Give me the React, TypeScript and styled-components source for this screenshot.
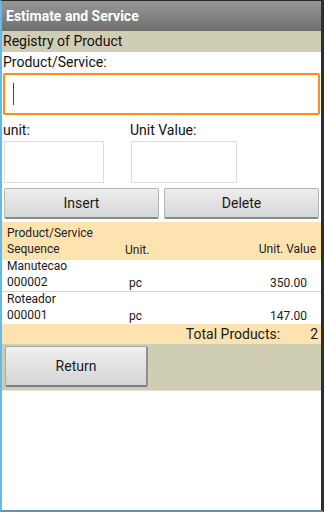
import styled, { createGlobalStyle } from 'styled-components';

const GlobalStyle = createGlobalStyle`
  html, body {
    margin: 0;
    padding: 0;
    background: #ffffff;
  }
  * {
    box-sizing: border-box;
  }
`;

const items = [
  { name: 'Manutecao', seq: '000002', unit: 'pc', value: '350.00' },
  { name: 'Roteador', seq: '000001', unit: 'pc', value: '147.00' },
];

const App = () => {
  return (
    <>
      <GlobalStyle />
      <Screen>
        <TitleBar>Estimate and Service</TitleBar>
        <SectionBar>Registry of Product</SectionBar>
        <Label>Product/Service:</Label>
        <MainInput>
          <Cursor />
        </MainInput>
        <FieldRow>
          <Field width={102}>
            <Label>unit:</Label>
            <SmallInput />
          </Field>
          <Field width={108}>
            <Label>Unit Value:</Label>
            <SmallInput />
          </Field>
        </FieldRow>
        <ButtonRow>
          <Button>Insert</Button>
          <Button>Delete</Button>
        </ButtonRow>
        <TableHead>
          <HeadCell>
            <div>Product/Service</div>
            <div>Sequence</div>
          </HeadCell>
          <HeadUnit>Unit.</HeadUnit>
          <HeadValue>Unit. Value</HeadValue>
        </TableHead>
        {items.map((i, key) => (
          <Row key={key} last={key === items.length - 1}>
            <Cell>
              <div>{i.name}</div>
              <div>{i.seq}</div>
            </Cell>
            <UnitCell>{i.unit}</UnitCell>
            <ValueCell>{i.value}</ValueCell>
          </Row>
        ))}
        <TotalRow>
          <span>Total Products:</span>
          <TotalCount>2</TotalCount>
        </TotalRow>
        <Footer>
          <ReturnButton>Return</ReturnButton>
        </Footer>
      </Screen>
    </>
  );
};

export default App;

const Screen = styled.div`
  width: 324px;
  height: 512px;
  display: flex;
  flex-direction: column;
  background: #ffffff;
  border-top: 1px solid #2b2b2b;
  border-left: 2px solid #6cb8dc;
  border-right: 3px solid #2e2e2e;
  border-bottom: 2px solid #5d95b0;
  font-family: Roboto, 'Liberation Sans', sans-serif;
  color: #111111;
  overflow: hidden;
`;

const TitleBar = styled.div`
  height: 30px;
  flex-shrink: 0;
  display: flex;
  align-items: center;
  padding: 0 0 0 4px;
  background: linear-gradient(#979797, #6f6f6f);
  color: #ffffff;
  font-weight: bold;
  font-size: 14px;
`;

const SectionBar = styled.div`
  height: 21px;
  flex-shrink: 0;
  display: flex;
  align-items: center;
  padding: 0 0 2px 1px;
  background: #d0cdb5;
  font-size: 14px;
`;

const Label = styled.div`
  height: 20px;
  display: flex;
  align-items: center;
  padding-left: 1px;
  font-size: 14px;
`;

const MainInput = styled.div`
  height: 42px;
  flex-shrink: 0;
  margin: 1px 1px 0 1px;
  border: 2px solid #ff8c14;
  border-radius: 2px;
  display: flex;
  align-items: center;
  padding-left: 8px;
`;

const Cursor = styled.div`
  width: 1px;
  height: 22px;
  background: #444444;
`;

const FieldRow = styled.div`
  display: flex;
  gap: 25px;
  margin-top: 5px;
`;

const Field = styled.div<{ width: number }>`
  display: flex;
  flex-direction: column;
  width: ${(p) => p.width}px;
`;

const SmallInput = styled.div`
  height: 42px;
  margin: 1px 0 0 2px;
  border: 1px solid #dedede;
  background: #ffffff;
`;

const ButtonRow = styled.div`
  display: flex;
  gap: 5px;
  padding: 5px 2px 0 2px;
`;

const Button = styled.div`
  flex: 1;
  height: 31px;
  display: flex;
  align-items: center;
  justify-content: center;
  background: linear-gradient(#eeeeee, #d6d6d6);
  border: 1px solid #b4b4b4;
  border-bottom: 2px solid #8a8a8a;
  border-radius: 2px;
  font-size: 14px;
  color: #1a1a1a;
`;

const TableHead = styled.div`
  margin-top: 3px;
  height: 38px;
  flex-shrink: 0;
  display: flex;
  align-items: flex-end;
  padding: 0 5px 3px 5px;
  background: #fde3b0;
  font-size: 12px;
  color: #222222;
`;

const HeadCell = styled.div`
  width: 118px;
  line-height: 16px;
`;

const HeadUnit = styled.div`
  width: 60px;
  line-height: 14px;
`;

const HeadValue = styled.div`
  flex: 1;
  text-align: right;
  line-height: 16px;
`;

const Row = styled.div<{ last?: boolean }>`
  height: 32px;
  flex-shrink: 0;
  display: flex;
  align-items: flex-end;
  padding: 0 14px 1px 5px;
  border-bottom: ${(p) => (p.last ? 'none' : '1px solid #d4d4d4')};
  font-size: 12px;
  color: #1a1a1a;
`;

const Cell = styled.div`
  width: 122px;
  line-height: 16px;
`;

const UnitCell = styled.div`
  width: 60px;
  line-height: 14px;
`;

const ValueCell = styled.div`
  flex: 1;
  text-align: right;
  line-height: 14px;
`;

const TotalRow = styled.div`
  height: 20px;
  flex-shrink: 0;
  display: flex;
  align-items: center;
  justify-content: flex-end;
  padding-right: 3px;
  background: #fde3b0;
  font-size: 14px;
  color: #1a1a1a;
`;

const TotalCount = styled.span`
  margin-left: 30px;
`;

const Footer = styled.div`
  height: 47px;
  flex-shrink: 0;
  padding: 2px 0 0 3px;
  background: #d0cdb5;
  border-bottom: 1px solid #e4e2d4;
`;

const ReturnButton = styled.div`
  width: 143px;
  height: 41px;
  display: flex;
  align-items: center;
  justify-content: center;
  background: linear-gradient(#f0f0f0, #d4d4d4);
  border: 1px solid #a8a8a8;
  border-bottom: 2px solid #7e7e7e;
  border-right: 2px solid #8e8e8e;
  border-radius: 2px;
  font-size: 14px;
  color: #1a1a1a;
`;
